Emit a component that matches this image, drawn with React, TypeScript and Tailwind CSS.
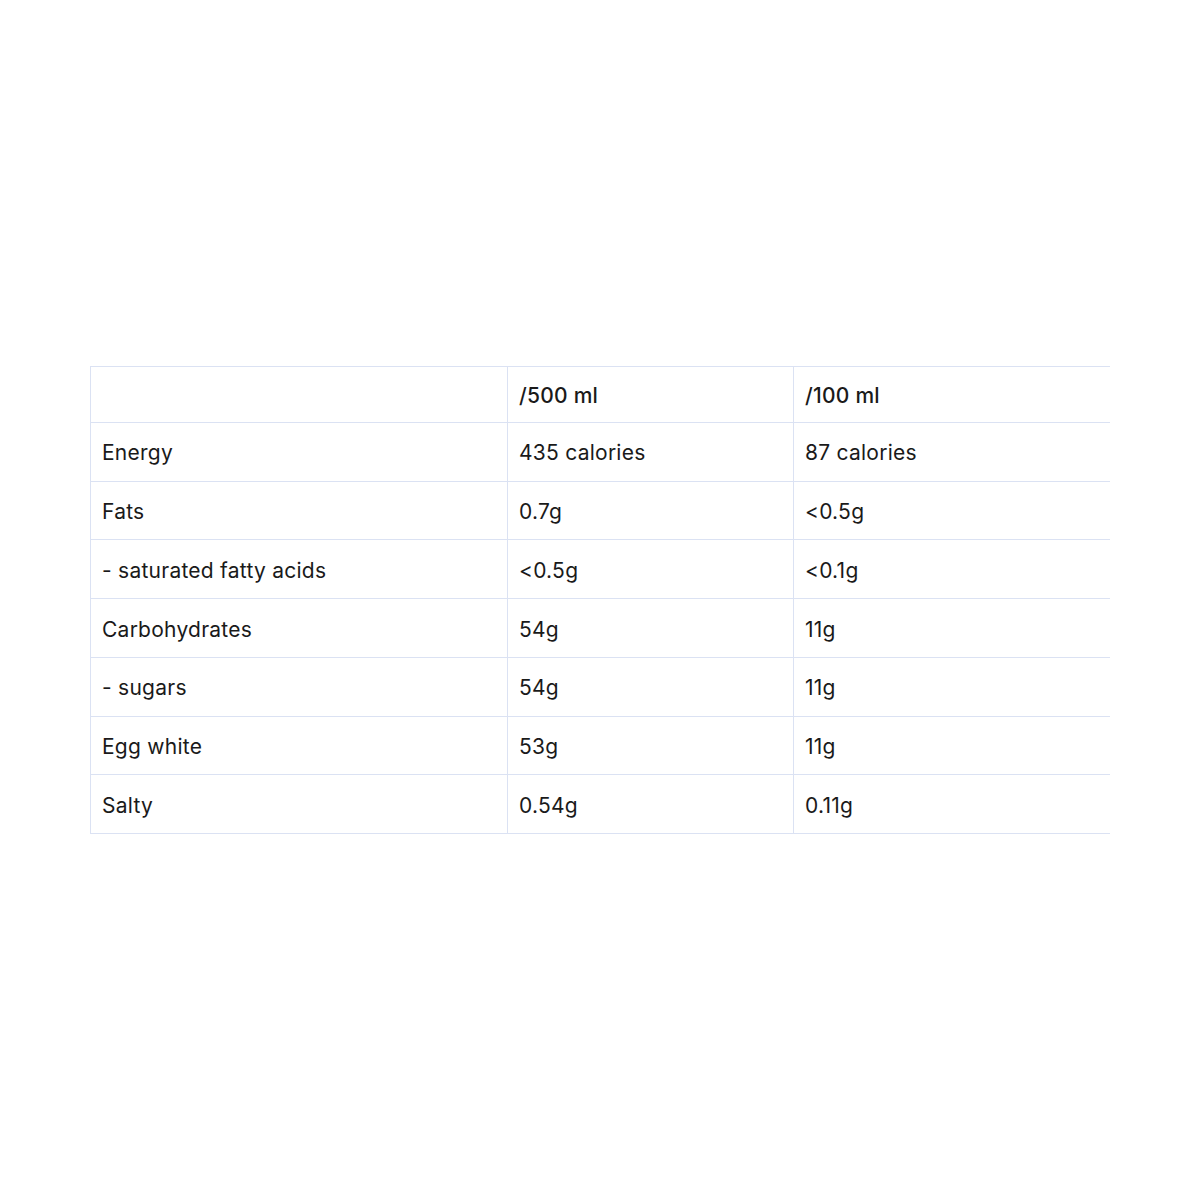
import React from 'react'

const rows = [
  ['Energy', '435 calories', '87 calories'],
  ['Fats', '0.7g', '<0.5g'],
  ['- saturated fatty acids', '<0.5g', '<0.1g'],
  ['Carbohydrates', '54g', '11g'],
  ['- sugars', '54g', '11g'],
  ['Egg white', '53g', '11g'],
  ['Salty', '0.54g', '0.11g'],
]

export default function App() {
  return (
    <div
      className="flex h-[1200px] w-full items-center justify-center bg-white text-[#1a1a1a]"
      style={{ fontFamily: 'Inter, "Noto Sans", sans-serif' }}
    >
      <table className="w-[1020px] border-collapse text-[21px] leading-[28px] tracking-[0.25px]">
        <thead>
          <tr className="h-[56px]">
            <th className="w-[417px] border-y border-l border-[#dbe2f3] px-[11px]"></th>
            <th className="w-[286px] border border-[#dbe2f3] px-[11px] pt-[2px] text-left font-medium">/500 ml</th>
            <th className="border-y border-l border-[#dbe2f3] px-[11px] pt-[2px] text-left font-medium">/100 ml</th>
          </tr>
        </thead>
        <tbody>
          {rows.map((r, i) => (
            <tr key={i} className="h-[58.7px]">
              <td className="border-y border-l border-[#dbe2f3] px-[11px] pt-[3px]">{r[0]}</td>
              <td className="border border-[#dbe2f3] px-[11px] pt-[3px]">{r[1]}</td>
              <td className="border-y border-l border-[#dbe2f3] px-[11px] pt-[3px]">{r[2]}</td>
            </tr>
          ))}
        </tbody>
      </table>
    </div>
  )
}
